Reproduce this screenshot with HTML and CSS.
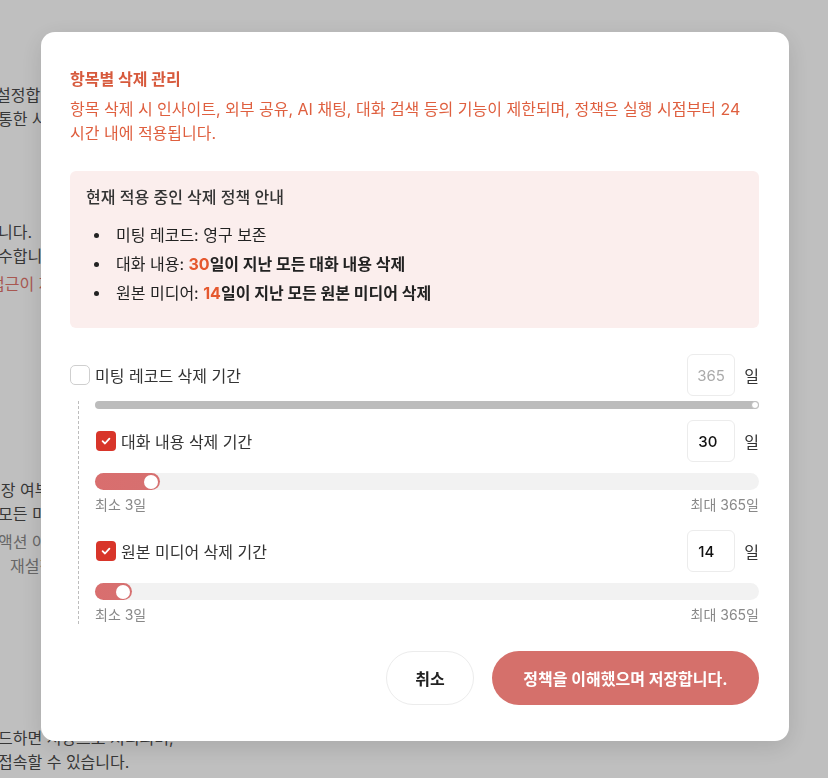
FILE: index.html
```html
<!DOCTYPE html>
<html lang="ko">
<head>
    <meta charset="UTF-8">
    <title>삭제 정책 설정</title>
    <link rel="stylesheet" href="styles.css">
</head>
<body>
  <div class="page">
    <p class="bg-line s1">설정합니다. 기존 정책은</p>
    <p class="bg-line">통한 사용자 접근 권한</p>
    <p class="bg-line s2">니다.</p>
    <p class="bg-line">수합니다</p>
    <p class="bg-line red s3">접근이 제한됩니다</p>
    <p class="bg-line s4">저장 여부와 상관없이</p>
    <p class="bg-line">모든 미팅</p>
    <p class="bg-line muted s3">액션 아이템</p>
    <p class="bg-line muted indent">재설정할 수</p>
    <p class="bg-line s5">드하면 저장으로 처리되며,</p>
    <p class="bg-line">접속할 수 있습니다.</p>
  </div>

  <div class="backdrop">
    <div class="modal">
      <h2 class="modal-title">항목별 삭제 관리</h2>
      <p class="modal-desc">항목 삭제 시 인사이트, 외부 공유, AI 채팅, 대화 검색 등의 기능이 제한되며, 정책은 실행 시점부터 24 시간 내에 적용됩니다.</p>

      <div class="notice">
        <div class="notice-title">현재 적용 중인 삭제 정책 안내</div>
        <ul class="notice-list">
          <li><span class="dot"></span>미팅 레코드: 영구 보존</li>
          <li><span class="dot"></span>대화 내용:&nbsp;<b><em>30</em>일이 지난 모든 대화 내용 삭제</b></li>
          <li><span class="dot"></span>원본 미디어:&nbsp;<b><em>14</em>일이 지난 모든 원본 미디어 삭제</b></li>
        </ul>
      </div>

      <div class="row">
        <label class="check-label">
          <span class="checkbox"></span>
          미팅 레코드 삭제 기간
        </label>
        <div class="days">
          <span class="day-input disabled">365</span>
          <span class="day-unit">일</span>
        </div>
      </div>

      <div class="group">
        <div class="slider-gray"><span class="gray-thumb"></span></div>

        <div class="row sub">
          <label class="check-label">
            <span class="checkbox checked">
              <svg width="12" height="12" viewBox="0 0 12 12"><path d="M2.6 6.2 L5 8.5 L9.4 3.6" fill="none" stroke="#fff" stroke-width="1.8" stroke-linecap="round" stroke-linejoin="round"/></svg>
            </span>
            대화 내용 삭제 기간
          </label>
          <div class="days">
            <span class="day-input">30</span>
            <span class="day-unit">일</span>
          </div>
        </div>
        <div class="slider">
          <div class="slider-fill" style="width:65px"><span class="thumb"></span></div>
        </div>
        <div class="range-labels"><span>최소 3일</span><span>최대 365일</span></div>

        <div class="row sub second">
          <label class="check-label">
            <span class="checkbox checked">
              <svg width="12" height="12" viewBox="0 0 12 12"><path d="M2.6 6.2 L5 8.5 L9.4 3.6" fill="none" stroke="#fff" stroke-width="1.8" stroke-linecap="round" stroke-linejoin="round"/></svg>
            </span>
            원본 미디어 삭제 기간
          </label>
          <div class="days">
            <span class="day-input">14</span>
            <span class="day-unit">일</span>
          </div>
        </div>
        <div class="slider">
          <div class="slider-fill" style="width:37px"><span class="thumb"></span></div>
        </div>
        <div class="range-labels"><span>최소 3일</span><span>최대 365일</span></div>
      </div>

      <div class="footer">
        <button class="btn cancel">취소</button>
        <button class="btn save">정책을 이해했으며 저장합니다.</button>
      </div>
    </div>
  </div>
</body>
</html>
```

FILE: styles.css
```css
*{
  margin:0;
  padding:0;
  box-sizing:border-box;
}
body{
  background:#fff;
  font-family: Inter, "Noto Sans CJK KR", sans-serif;
  color:#222;
  overflow:hidden;
  height:778px;
}

/* page behind the dialog */
.page{
  padding-top:83px;
}
.bg-line{
  font-size:16px;
  line-height:24px;
  color:#4a4a4a;
  white-space:nowrap;
  margin-left:-2px;
}
.bg-line.s1{ margin-left:-4px; }
.bg-line.s2{ margin-top:89px; }
.bg-line.s3{ margin-top:4px; }
.bg-line.s4{ margin-top:182px; margin-left:-14px; }
.bg-line.s5{ margin-top:148px; }
.bg-line.red{ color:#e0746c; margin-left:-10px; }
.bg-line.muted{ color:#8a8a8a; }
.bg-line.indent{ padding-left:12px; }

.backdrop{
  position:fixed;
  inset:0;
  background:rgba(0,0,0,0.25);
  display:flex;
  justify-content:flex-start;
  align-items:flex-start;
  padding:32px 0 0 41px;
}
.modal{
  width:748px;
  background:#fff;
  border-radius:14px;
  padding:36px 30px 36px 29px;
  box-shadow:0 6px 24px rgba(0,0,0,0.12);
}
.modal-title{
  font-size:16px;
  line-height:22px;
  font-weight:700;
  color:#d75a3d;
}
.modal-desc{
  margin-top:7px;
  font-size:16px;
  line-height:24px;
  color:#df5f3f;
}

.notice{
  margin-top:26px;
  background:#fbeeed;
  border-radius:6px;
  padding:15px 16px 20px;
}
.notice-title{
  font-size:16px;
  line-height:22px;
  font-weight:500;
  color:#333;
}
.notice-list{
  list-style:none;
  margin-top:13px;
}
.notice-list li{
  display:flex;
  align-items:center;
  font-size:16px;
  line-height:29px;
  color:#222;
}
.notice-list .dot{
  width:5px;
  height:5px;
  border-radius:50%;
  background:#222;
  margin:0 17px 0 8px;
  flex:none;
}
.notice-list b{
  font-weight:700;
}
.notice-list em{
  font-style:normal;
  color:#e5582f;
}

.row{
  display:flex;
  justify-content:space-between;
  align-items:center;
  margin-top:26px;
}
.row.sub{
  margin-top:11px;
}
.row.sub.second{
  margin-top:16px;
}
.check-label{
  display:flex;
  align-items:center;
  gap:5px;
  font-size:16px;
  color:#333;
}
.checkbox{
  width:20px;
  height:20px;
  border:1px solid #cfcfcf;
  border-radius:5px;
  background:#fff;
  display:flex;
  align-items:center;
  justify-content:center;
}
.checkbox.checked{
  border:none;
  background:#d8352a;
  border-radius:4px;
}
.row.sub .checkbox{
  margin-left:1px;
}
.days{
  display:flex;
  align-items:center;
  gap:9px;
}
.day-input{
  width:48px;
  height:42px;
  border:1px solid #ececec;
  border-radius:6px;
  display:flex;
  align-items:center;
  padding-left:10px;
  font-size:15px;
  font-weight:500;
  color:#111;
}
.day-input.disabled{
  color:#aaa;
  font-weight:400;
  padding-left:9px;
}
.day-unit{
  font-size:16px;
  color:#333;
}

.group{
  margin-top:5px;
  margin-left:8px;
  padding-left:16px;
  border-left:1px dashed #bdbdbd;
}
.slider-gray{
  height:8px;
  border-radius:4px;
  background:#bcbcbc;
  display:flex;
  justify-content:flex-end;
  align-items:center;
}
.gray-thumb{
  width:8px;
  height:8px;
  border-radius:50%;
  background:#fff;
  border:1.5px solid #bcbcbc;
}
.slider{
  margin-top:11px;
  height:17px;
  border-radius:9px;
  background:#f2f2f2;
}
.slider-fill{
  height:17px;
  border-radius:9px;
  background:linear-gradient(90deg,#d96e6e,#d67070);
  display:flex;
  justify-content:flex-end;
  align-items:center;
  padding-right:2px;
}
.thumb{
  width:14px;
  height:14px;
  border-radius:50%;
  background:#fff;
}
.range-labels{
  margin-top:6px;
  display:flex;
  justify-content:space-between;
  font-size:14px;
  line-height:18px;
  color:#888;
}

.footer{
  margin-top:27px;
  display:flex;
  justify-content:flex-end;
  gap:18px;
}
.btn{
  height:54px;
  border-radius:27px;
  font-family: Inter, "Noto Sans CJK KR", sans-serif;
  font-size:16px;
  font-weight:700;
}
.cancel{
  width:88px;
  background:#fff;
  border:1px solid #ececec;
  color:#222;
}
.save{
  width:267px;
  background:#d5706b;
  border:none;
  color:#fff;
}
```
